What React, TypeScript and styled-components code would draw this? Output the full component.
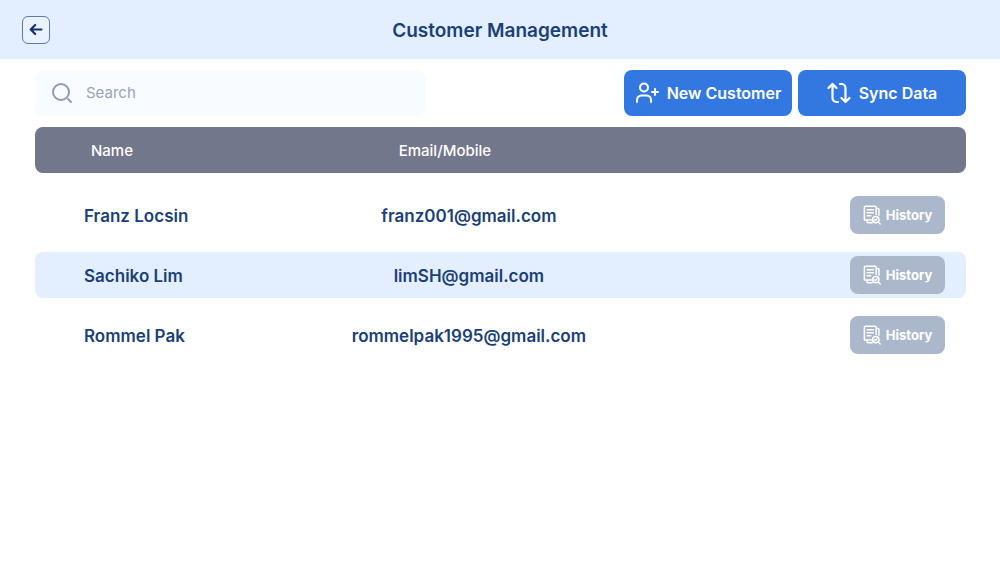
import React from "react";
import styled, { createGlobalStyle } from "styled-components";

const GlobalStyle = createGlobalStyle`
  *, *::before, *::after { box-sizing: border-box; }
  body {
    margin: 0;
    background: #ffffff;
    color: #1b3f77;
    font-family: Inter, "Liberation Sans", sans-serif;
  }
  button, input { font-family: inherit; }
`;

const Header = styled.header`
  display: grid;
  grid-template-columns: 1fr auto 1fr;
  align-items: center;
  height: 59px;
  padding: 0 22px;
  background: #e3effe;
`;

const BackButton = styled.button`
  display: flex;
  align-items: center;
  justify-content: center;
  width: 28px;
  height: 28px;
  padding: 0;
  border: 1px solid #5d7cab;
  border-radius: 6px;
  background: #e9f2fe;
  color: #123370;
  cursor: pointer;
`;

const Title = styled.h1`
  margin: 0;
  padding-top: 2px;
  font-size: 19px;
  font-weight: 600;
  line-height: 24px;
`;

const Content = styled.main`
  padding: 11px 34px 24px 35px;
`;

const Toolbar = styled.div`
  display: flex;
  align-items: center;
  gap: 6px;
  margin-bottom: 11px;
`;

const SearchBox = styled.label`
  display: flex;
  align-items: center;
  gap: 13px;
  width: 42%;
  height: 46px;
  margin-right: auto;
  padding: 0 16px;
  border-radius: 8px;
  background: #f8fbff;
  color: #909bb5;
`;

const SearchInput = styled.input`
  flex: 1;
  min-width: 0;
  padding: 0;
  border: 0;
  outline: 0;
  background: transparent;
  color: #1b3f77;
  font-size: 15px;
  line-height: 24px;

  &::placeholder {
    color: #98a3ba;
    opacity: 1;
  }
`;

const ActionButton = styled.button`
  display: flex;
  align-items: center;
  justify-content: center;
  gap: 8px;
  width: 168px;
  height: 46px;
  padding: 0;
  border: 0;
  border-radius: 8px;
  background: #3378e0;
  color: #ffffff;
  font-size: 16px;
  font-weight: 600;
  line-height: 20px;
  white-space: nowrap;
  cursor: pointer;
`;

const Table = styled.table`
  display: block;
`;

const TableHead = styled.thead`
  display: block;
`;

const TableBody = styled.tbody`
  display: flex;
  flex-direction: column;
  gap: 14px;
  padding-top: 19px;
`;

const Row = styled.tr<{ $tone?: "head" | "highlight" }>`
  display: grid;
  grid-template-columns: 26fr 41fr 33fr;
  align-items: center;
  height: 46px;
  border-radius: 8px;
  background: ${({ $tone }) =>
    $tone === "head" ? "#72778b" : $tone === "highlight" ? "#e3effe" : "transparent"};
`;

const HeadCell = styled.th<{ $align?: "left" | "center" }>`
  padding: ${({ $align }) => ($align === "center" ? "2px 46px 0 0" : "2px 0 0 56px")};
  color: #ffffff;
  font-size: 15px;
  font-weight: 500;
  line-height: 20px;
  text-align: ${({ $align = "left" }) => $align};
`;

const NameCell = styled.td`
  padding: 2px 0 0 49px;
  font-size: 17px;
  font-weight: 600;
  line-height: 24px;
`;

const EmailCell = styled.td`
  padding: 2px 0 0 2px;
  font-size: 17px;
  font-weight: 600;
  line-height: 24px;
  text-align: center;
`;

const ActionCell = styled.td`
  display: flex;
  justify-content: flex-end;
  padding: 0 21px 0 0;
`;

const HistoryButton = styled.button`
  display: flex;
  align-items: center;
  justify-content: center;
  gap: 5px;
  width: 95px;
  height: 38px;
  padding: 0;
  border: 0;
  border-radius: 8px;
  background: #abb7ca;
  color: #ffffff;
  font-size: 13px;
  font-weight: 700;
  line-height: 20px;
  cursor: pointer;
`;

const Icon = styled.svg`
  flex: none;
  fill: none;
  stroke: currentColor;
  stroke-linecap: round;
  stroke-linejoin: round;
`;

const ArrowLeftIcon = () => (
  <Icon width="14" height="14" viewBox="0 0 14 14" strokeWidth="2.2" aria-hidden="true">
    <path d="M12.500 6.500H2M6.200 2 1.700 6.500l4.500 4.500" />
  </Icon>
);

const SearchIcon = () => (
  <Icon width="22" height="22" viewBox="0 0 22 22" strokeWidth="2" aria-hidden="true">
    <circle cx="10" cy="10" r="8" />
    <path d="m17 17 3 3" />
  </Icon>
);

const UserPlusIcon = () => (
  <Icon width="24" height="22" viewBox="0 0 24 22" strokeWidth="2" aria-hidden="true">
    <circle cx="9" cy="5.500" r="4" />
    <path d="M2 20v-2a4.500 4.500 0 0 1 4.500-4.500h5a4.500 4.500 0 0 1 4.500 4.500v2M20 7v6M17 10h6" />
  </Icon>
);

const SyncIcon = () => (
  <Icon width="24" height="22" viewBox="0 0 24 22" strokeWidth="2.200" aria-hidden="true">
    <path d="M1.500 6 5.500 2l4 4M5.500 2.500v13.500a4 4 0 0 0 4 4h1.500M22.500 16l-4 4-4-4M18.500 19.500V6a4 4 0 0 0-4-4H13" />
  </Icon>
);

const HistoryIcon = () => (
  <Icon width="18" height="20" viewBox="0 0 18 20" strokeWidth="1.500" aria-hidden="true">
    <path d="M1.400 15V2.200a1 1 0 0 1 1-1h9.800a1 1 0 0 1 1 1v7.200M1.400 15h7.100M4.200 4.800h6.200M4.200 7.800h6.200M4.200 10.800h3.500M13.500 3.600h1.500a.9.9 0 0 1 .9.9v5.700M4 15.200v1.600a.9.9 0 0 0 .9.9h4.200" />
    <circle cx="12.800" cy="14.600" r="3.200" />
    <path d="m15.200 17 2 2M11.700 14.700l.8.7 1.400-1.500" />
  </Icon>
);

const customers = [
  { name: "Franz Locsin", email: "franz001@gmail.com" },
  { name: "Sachiko Lim", email: "limSH@gmail.com" },
  { name: "Rommel Pak", email: "rommelpak1995@gmail.com" },
];

export default function App() {
  return (
    <>
      <GlobalStyle />
      <Header>
        <BackButton type="button" aria-label="Back">
          <ArrowLeftIcon />
        </BackButton>
        <Title>Customer Management</Title>
      </Header>
      <Content>
        <Toolbar>
          <SearchBox>
            <SearchIcon />
            <SearchInput type="search" placeholder="Search" aria-label="Search" />
          </SearchBox>
          <ActionButton type="button">
            <UserPlusIcon />
            New Customer
          </ActionButton>
          <ActionButton type="button">
            <SyncIcon />
            Sync Data
          </ActionButton>
        </Toolbar>
        <Table>
          <TableHead>
            <Row $tone="head">
              <HeadCell scope="col">Name</HeadCell>
              <HeadCell scope="col" $align="center">
                Email/Mobile
              </HeadCell>
            </Row>
          </TableHead>
          <TableBody>
            {customers.map((customer, index) => (
              <Row key={customer.email} $tone={index % 2 === 1 ? "highlight" : undefined}>
                <NameCell>{customer.name}</NameCell>
                <EmailCell>{customer.email}</EmailCell>
                <ActionCell>
                  <HistoryButton type="button">
                    <HistoryIcon />
                    History
                  </HistoryButton>
                </ActionCell>
              </Row>
            ))}
          </TableBody>
        </Table>
      </Content>
    </>
  );
}
